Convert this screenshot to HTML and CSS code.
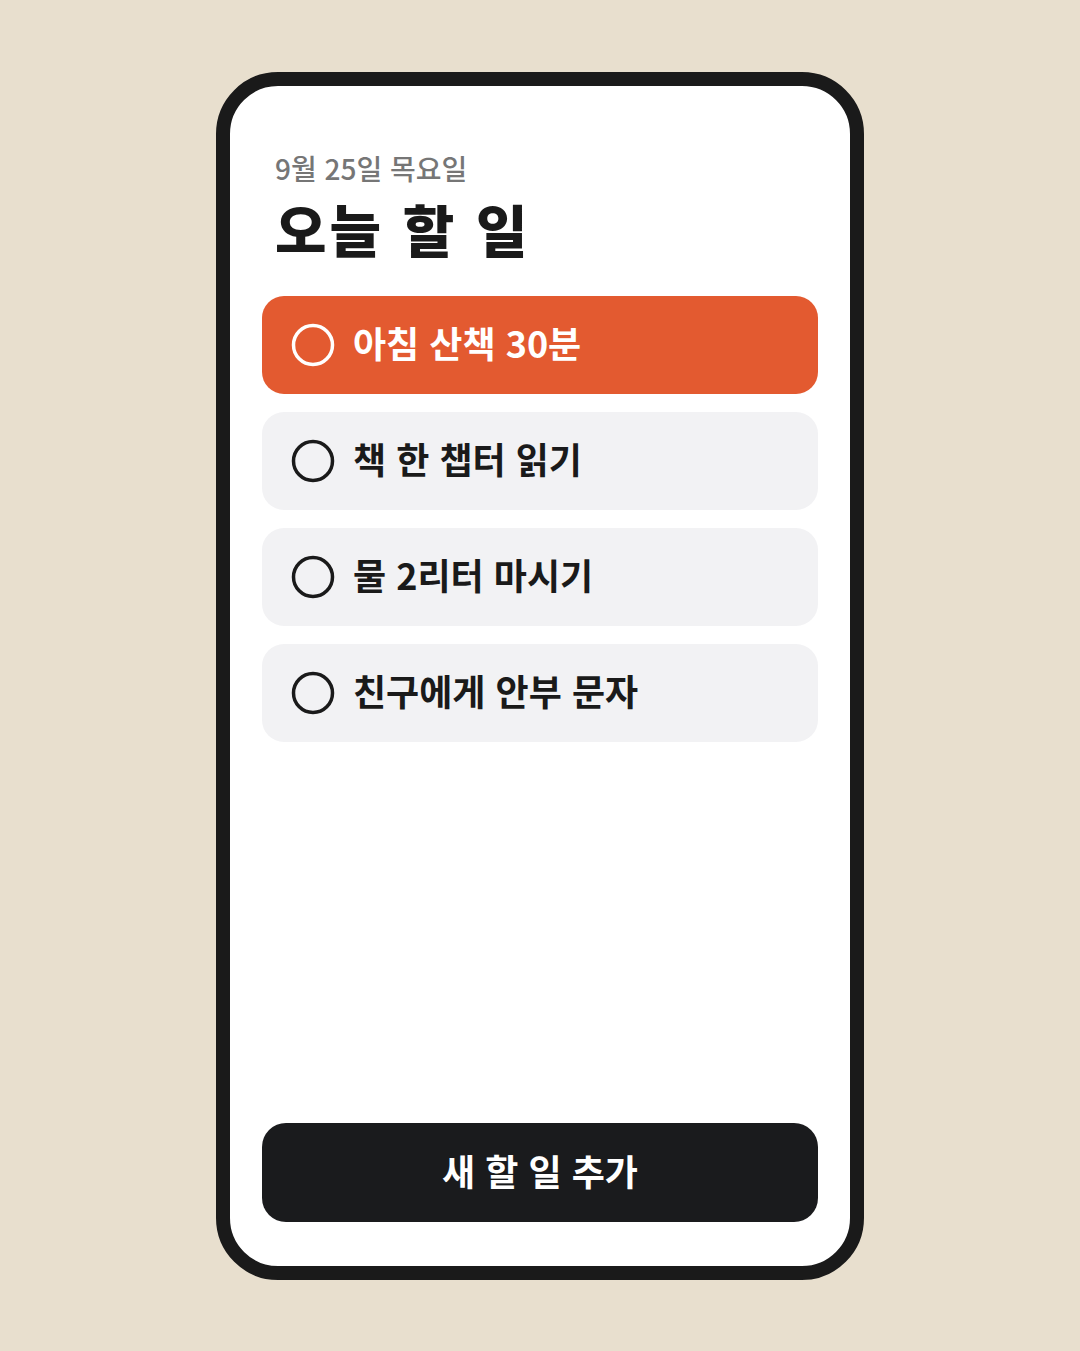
FILE: index.html
```html
<!DOCTYPE html>
<html lang="ko">
<head>
    <meta charset="UTF-8">
    <meta name="viewport" content="width=device-width, initial-scale=1.0">
    <title>오늘 할 일</title>
    <link rel="stylesheet" href="styles.css">
</head>
<body>
    <div class="phone">
        <div class="header">
            <div class="date">9월 25일 목요일</div>
            <h1>오늘 할 일</h1>
        </div>

        <div class="todo-list">
            <div class="todo active">
                <svg class="check" viewBox="0 0 44 44"><circle cx="22" cy="22" r="19.5"/></svg>
                <span>아침 산책 30분</span>
            </div>
            <div class="todo">
                <svg class="check" viewBox="0 0 44 44"><circle cx="22" cy="22" r="19.5"/></svg>
                <span>책 한 챕터 읽기</span>
            </div>
            <div class="todo">
                <svg class="check" viewBox="0 0 44 44"><circle cx="22" cy="22" r="19.5"/></svg>
                <span>물 2리터 마시기</span>
            </div>
            <div class="todo">
                <svg class="check" viewBox="0 0 44 44"><circle cx="22" cy="22" r="19.5"/></svg>
                <span>친구에게 안부 문자</span>
            </div>
        </div>

        <button class="add-btn">새 할 일 추가</button>
    </div>
</body>
</html>
```

FILE: styles.css
```css
* {
    box-sizing: border-box;
}
body {
    margin: 0;
    font-family: "Noto Sans CJK KR", "Noto Sans", sans-serif;
    background-color: #e8dfce;
    display: flex;
    justify-content: center;
    align-items: center;
    height: 100vh;
}
.phone {
    width: 648px;
    height: 1208px;
    background: white;
    border: 14px solid #1a1a1a;
    border-radius: 62px;
    padding: 66px 32px 44px;
    display: flex;
    flex-direction: column;
}
.header {
    padding-left: 13px;
    margin-bottom: 36px;
}
.date {
    font-size: 28px;
    font-weight: 500;
    color: #767676;
    line-height: 32px;
}
h1 {
    margin: 12px 0 0;
    font-size: 56px;
    font-weight: 900;
    color: #1a1a1a;
    line-height: 64px;
    letter-spacing: 3px;
}
.todo-list {
    display: flex;
    flex-direction: column;
    gap: 18px;
}
.todo {
    height: 98px;
    border-radius: 22px;
    background: #f2f2f4;
    display: flex;
    align-items: center;
    gap: 18px;
    padding-left: 29px;
    font-size: 36px;
    font-weight: 600;
    color: #1a1a1a;
}
.todo span {
    margin-bottom: 6px;
}
.todo.active {
    background: #e35a30;
    color: white;
    font-weight: 700;
}
.check {
    width: 44px;
    height: 44px;
    flex-shrink: 0;
}
.check circle {
    fill: none;
    stroke: currentColor;
    stroke-width: 3.5;
}
.add-btn {
    margin-top: auto;
    height: 99px;
    padding: 0 0 4px;
    border: none;
    border-radius: 24px;
    background: #1a1b1d;
    color: white;
    font-family: inherit;
    font-size: 36px;
    font-weight: 700;
    cursor: pointer;
}
```
